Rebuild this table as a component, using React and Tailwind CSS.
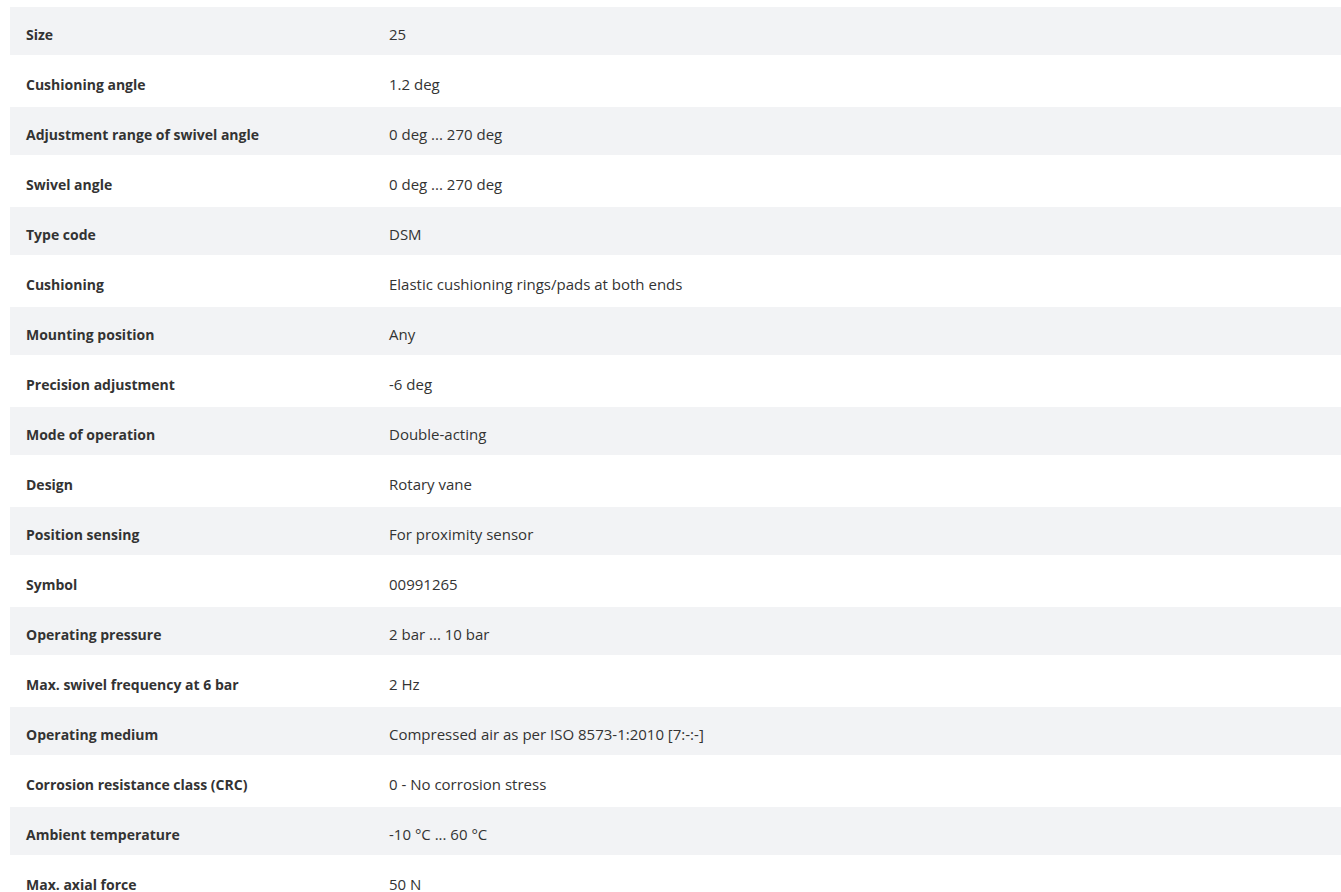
const specs = [
  ['Size', '25'],
  ['Cushioning angle', '1.2 deg'],
  ['Adjustment range of swivel angle', '0 deg ... 270 deg'],
  ['Swivel angle', '0 deg ... 270 deg'],
  ['Type code', 'DSM'],
  ['Cushioning', 'Elastic cushioning rings/pads at both ends'],
  ['Mounting position', 'Any'],
  ['Precision adjustment', '-6 deg'],
  ['Mode of operation', 'Double-acting'],
  ['Design', 'Rotary vane'],
  ['Position sensing', 'For proximity sensor'],
  ['Symbol', '00991265'],
  ['Operating pressure', '2 bar ... 10 bar'],
  ['Max. swivel frequency at 6 bar', '2 Hz'],
  ['Operating medium', 'Compressed air as per ISO 8573-1:2010 [7:-:-]'],
  ['Corrosion resistance class (CRC)', '0 - No corrosion stress'],
  ['Ambient temperature', '-10 °C ... 60 °C'],
  ['Max. axial force', '50 N'],
];

export default function App() {
  return (
    <div className="min-h-screen bg-white pt-[7px] pl-[10px] font-['Open_Sans',sans-serif] text-[#333]">
      {specs.map(([label, value], i) => (
        <div
          key={label}
          className={`flex items-center pt-[7px] ${i % 2 === 0 ? 'h-[48px] bg-[#f2f3f5]' : 'h-[52px] bg-white'}`}
        >
          <div className="w-[379px] shrink-0 pl-4 text-[14px] font-bold">{label}</div>
          <div className="text-[15px]">{value}</div>
        </div>
      ))}
    </div>
  );
}
